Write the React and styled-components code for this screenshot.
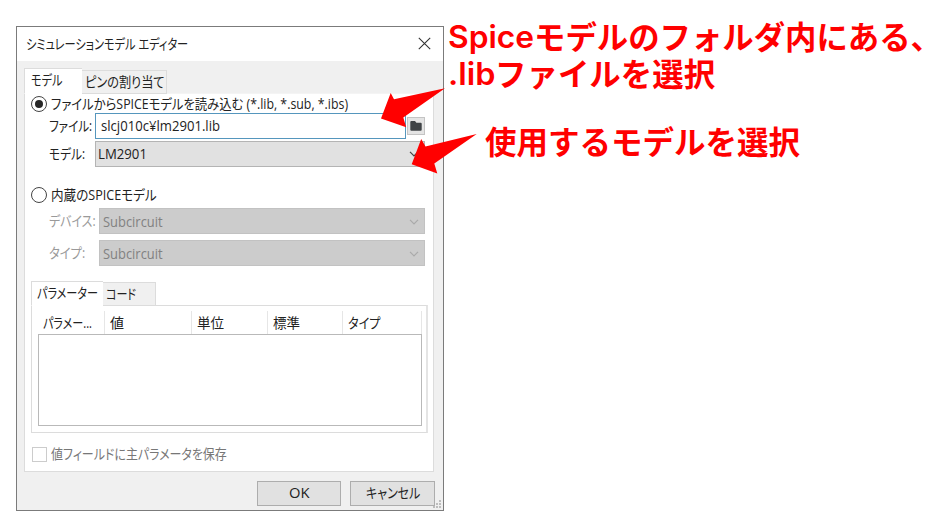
import React, { useLayoutEffect, useRef, useState } from "react";
import styled, { createGlobalStyle } from "styled-components";

const GlobalStyle = createGlobalStyle`
  * { box-sizing: border-box; }
  body {
    margin: 0;
    background: #fff;
    color: #222;
    font: 14px/20px "Open Sans", "Noto Sans CJK JP", sans-serif;
  }
`;

const Page = styled.main`
  position: relative;
  display: flex;
  align-items: flex-start;
  width: 930px;
  height: 525px;
  padding: 26px 0 0 16px;
  overflow: hidden;
`;

const Dialog = styled.section`
  position: relative;
  flex: none;
  display: flex;
  flex-direction: column;
  width: 428px;
  height: 485px;
  border: 1px solid #7b7b7b;
  background: #f0f0f0;
`;

const TitleBar = styled.header`
  display: flex;
  align-items: center;
  justify-content: space-between;
  height: 34px;
  padding: 0 12px 1px 9px;
  background: #fff;
`;

const TabRow = styled.div`
  display: flex;
  align-items: flex-end;
  height: ${(p) => p.$height}px;
  margin-bottom: -1px;
`;

const Tab = styled.div`
  display: flex;
  align-items: center;
  width: ${(p) => p.$width}px;
  height: ${(p) => p.$height}px;
  padding-left: ${(p) => p.$pad}px;
  padding-bottom: ${(p) => (p.$active ? 2 : 0)}px;
  border: 1px solid #dcdcdc;
  border-bottom-color: ${(p) => (p.$active ? "#fff" : "#dcdcdc")};
  border-left-width: ${(p) => (p.$active ? 1 : 0)}px;
  border-right-width: ${(p) => (p.$active ? 0 : 1)}px;
  background: ${(p) => (p.$active ? "#fff" : "#f0f0f0")};
`;

const Notebook = styled.div`
  margin: 7px 9px 0 7px;
`;

const Panel = styled.div`
  display: flex;
  flex-direction: column;
  height: 379px;
  padding: 1px 8px 0 6px;
  border: 1px solid #dcdcdc;
  border-top-color: #f4f4f4;
  background: #fff;
`;

const OptionRow = styled.label`
  display: flex;
  align-items: center;
  height: 18px;
  gap: 4px;
  margin-top: ${(p) => p.$top || 0}px;
  color: ${(p) => (p.$disabled ? "#777" : "inherit")};
`;

const Radio = styled.span`
  display: grid;
  place-items: center;
  flex: none;
  width: 16px;
  height: 16px;
  border: 1px solid #444;
  border-radius: 50%;

  &::after {
    content: "";
    width: 8px;
    height: 8px;
    border-radius: 50%;
    background: ${(p) => (p.$checked ? "#262626" : "transparent")};
  }
`;

const Check = styled.span`
  flex: none;
  width: 15px;
  height: 15px;
  margin-left: 1px;
  border: 1px solid #ccc;
`;

const Field = styled.div`
  display: flex;
  align-items: center;
  height: 26px;
  margin-top: ${(p) => p.$top}px;
  padding-left: 18px;
  color: ${(p) => (p.$disabled ? "#9a9a9a" : "inherit")};
`;

const FieldLabel = styled.span`
  display: flex;
  flex: none;
  width: ${(p) => p.$width}px;
`;

const TextInput = styled.div`
  display: flex;
  flex: 1;
  align-items: center;
  height: 26px;
  margin-right: 1px;
  padding-left: 5px;
  border: 1px solid #5596bd;
  background: #fff;
`;

const FolderButton = styled.div`
  display: grid;
  flex: none;
  place-items: center;
  width: 18px;
  height: 18px;
  border: 1px solid #c4c4c4;
  background: #e4e4e4;
`;

const Select = styled.div`
  display: flex;
  flex: 1;
  align-items: center;
  justify-content: space-between;
  height: 26px;
  padding: ${(p) => p.$drop || 0}px 5px 0 ${(p) => (p.$disabled ? 3 : 2)}px;
  border: 1px solid ${(p) => (p.$disabled ? "#c2c2c2" : "#b4b4b4")};
  background: ${(p) => (p.$disabled ? "#ccc" : "#e1e1e1")};
  color: ${(p) => (p.$disabled ? "#818181" : "inherit")};
`;

const InnerNotebook = styled.div`
  width: 397px;
  margin-top: 15px;
`;

const InnerPanel = styled.div`
  height: 128px;
  padding: 5px 5px 0 6px;
  border: 1px solid #dcdcdc;
  border-right: 2px solid #e4e4e4;
`;

const HeaderRow = styled.div`
  display: grid;
  grid-template-columns: 67px 87px 76px 75px 79px;
  height: 23px;
`;

const HeaderCell = styled.div`
  display: flex;
  align-items: center;
  padding-left: 5px;
  border-right: 1px solid #e6e6e6;
`;

const ListBody = styled.div`
  width: 384px;
  height: 92px;
  border: 1px solid #b9b9b9;
`;

const Footer = styled.footer`
  display: flex;
  justify-content: flex-end;
  gap: 9px;
  padding: 9px 8px 0 0;
`;

const Button = styled.div`
  display: flex;
  align-items: center;
  justify-content: center;
  width: ${(p) => p.$width}px;
  height: 25px;
  padding-bottom: 1px;
  border: 1px solid #adadad;
  background: #e1e1e1;
`;

const Grip = styled.svg`
  position: absolute;
  right: 1px;
  bottom: 1px;
`;

const Notes = styled.aside`
  display: flex;
  flex-direction: column;
  margin: -8px 0 0 4px;
  color: #f00;
  font: 700 31.3px/37px "Noto Sans CJK JP", sans-serif;
`;

const NoteLine = styled.div`
  display: flex;
  height: 37px;
  margin-top: ${(p) => p.$top || 0}px;
  padding-left: ${(p) => p.$indent || 0}px;
`;

const Latin = styled.span`
  padding-top: 1px;
  font-family: Inter, sans-serif;
  font-size: 31px;
  font-weight: 600;
`;

const Arrows = styled.svg`
  position: absolute;
  inset: 0;
  pointer-events: none;
`;

const FitBox = styled.span`
  display: block;
  flex: none;
  width: ${(p) => p.$width}px;
  height: ${(p) => (p.$large ? 36 : 20)}px;
  line-height: ${(p) => (p.$large ? 36 : 20)}px;
  white-space: nowrap;
  font-feature-settings: ${(p) => (p.$large ? '"halt"' : '"palt"')};
`;

const FitInner = styled.span`
  display: inline-block;
  transform-origin: 0 50%;
`;

/* Condenses or expands a run of text so that it fills the given width. */
function Fit({ width, large, children }) {
  const ref = useRef(null);
  const [scale, setScale] = useState(1);
  useLayoutEffect(() => {
    setScale(width / ref.current.offsetWidth);
  }, [width, children]);
  return (
    <FitBox $width={width} $large={large}>
      <FitInner ref={ref} style={{ transform: `scaleX(${scale})` }}>
        {children}
      </FitInner>
    </FitBox>
  );
}

function Chevron({ color }) {
  return (
    <svg width="10" height="6" viewBox="0 0 10 6" fill="none" stroke={color} strokeWidth="1.2">
      <path d="M1 .8 5 4.8 9 .8" />
    </svg>
  );
}

const columns = [
  ["パラメー...", 49],
  ["値", 14],
  ["単位", 27],
  ["標準", 27],
  ["タイプ", 32],
];

const gripDots = [[6, 0], [3, 3], [6, 3], [0, 6], [3, 6], [6, 6]];

export default function App() {
  return (
    <Page>
      <GlobalStyle />
      <Dialog>
        <TitleBar>
          <Fit width={162}>シミュレーションモデル エディター</Fit>
          <svg width="13" height="13" viewBox="0 0 13 13" stroke="#333" strokeWidth="1.1">
            <path d="M.8.8 12.2 12.2M12.2.8.8 12.2" />
          </svg>
        </TitleBar>

        <Notebook>
          <TabRow $height={26}>
            <Tab $active $width={58} $height={26} $pad={6}>
              <Fit width={32}>モデル</Fit>
            </Tab>
            <Tab $width={85} $height={24} $pad={3}>
              <Fit width={80}>ピンの割り当て</Fit>
            </Tab>
          </TabRow>
          <Panel>
            <OptionRow>
              <Radio $checked />
              <Fit width={297}>ファイルからSPICEモデルを読み込む (*.lib, *.sub, *.ibs)</Fit>
            </OptionRow>
            <Field $top={0}>
              <FieldLabel $width={46}>
                <Fit width={43}>ファイル:</Fit>
              </FieldLabel>
              <TextInput>
                <Fit width={119}>slcj010c¥lm2901.lib</Fit>
              </TextInput>
              <FolderButton>
                <svg width="12" height="10" viewBox="0 0 12 10" fill="#3f4346">
                  <path d="M1.3 0H5l1.4 1.8h4.3q1 0 1 1v6q0 1-1 1H1.3q-1 0-1-1V1q0-1 1-1Z" />
                </svg>
              </FolderButton>
            </Field>
            <Field $top={2}>
              <FieldLabel $width={46}>
                <Fit width={36}>モデル:</Fit>
              </FieldLabel>
              <Select>
                <Fit width={49}>LM2901</Fit>
                <Chevron color="#444" />
              </Select>
            </Field>
            <OptionRow $top={19}>
              <Radio />
              <Fit width={106}>内蔵のSPICEモデル</Fit>
            </OptionRow>
            <Field $top={4} $disabled>
              <FieldLabel $width={50}>
                <Fit width={47}>デバイス:</Fit>
              </FieldLabel>
              <Select $disabled $drop={2}>
                <Fit width={60}>Subcircuit</Fit>
                <Chevron color="#aaa" />
              </Select>
            </Field>
            <Field $top={6} $disabled>
              <FieldLabel $width={50}>
                <Fit width={36}>タイプ:</Fit>
              </FieldLabel>
              <Select $disabled $drop={1}>
                <Fit width={60}>Subcircuit</Fit>
                <Chevron color="#aaa" />
              </Select>
            </Field>

            <InnerNotebook>
              <TabRow $height={25}>
                <Tab $active $width={72} $height={25} $pad={5}>
                  <Fit width={61}>パラメーター</Fit>
                </Tab>
                <Tab $width={53} $height={24} $pad={3}>
                  <Fit width={30}>コード</Fit>
                </Tab>
              </TabRow>
              <InnerPanel>
                <HeaderRow>
                  {columns.map(([name, width]) => (
                    <HeaderCell key={name}>
                      <Fit width={width}>{name}</Fit>
                    </HeaderCell>
                  ))}
                </HeaderRow>
                <ListBody />
              </InnerPanel>
            </InnerNotebook>

            <OptionRow $top={12} $disabled>
              <Check />
              <Fit width={176}>値フィールドに主パラメータを保存</Fit>
            </OptionRow>
          </Panel>
        </Notebook>

        <Footer>
          <Button $width={84}>
            <Fit width={20}>OK</Fit>
          </Button>
          <Button $width={85}>
            <Fit width={54}>キャンセル</Fit>
          </Button>
        </Footer>
        <Grip width="9" height="9" fill="#bdbdbd">
          {gripDots.map(([x, y]) => (
            <rect key={`${x}-${y}`} x={x} y={y} width="2" height="2" />
          ))}
        </Grip>
      </Dialog>

      <Notes>
        <NoteLine>
          <Latin>
            <Fit large width={86}>Spice</Fit>
          </Latin>
          <Fit large width={392}>モデルのフォルダ内にある、</Fit>
        </NoteLine>
        <NoteLine>
          <Latin>
            <Fit large width={47}>.lib</Fit>
          </Latin>
          <Fit large width={220}>ファイルを選択</Fit>
        </NoteLine>
        <NoteLine $top={31} $indent={37}>
          <Fit large width={315}>使用するモデルを選択</Fit>
        </NoteLine>
      </Notes>

      <Arrows width="930" height="525" fill="#f00">
        <path d="M445 88.2 394 99.2 390.7 93 381 118.5 406.2 127.2 403.3 117.5Z" />
        <path d="M476.7 134 425.5 146.5 421.2 139 411.7 164.2 437.3 173.4 434.3 163.5Z" />
      </Arrows>
    </Page>
  );
}
